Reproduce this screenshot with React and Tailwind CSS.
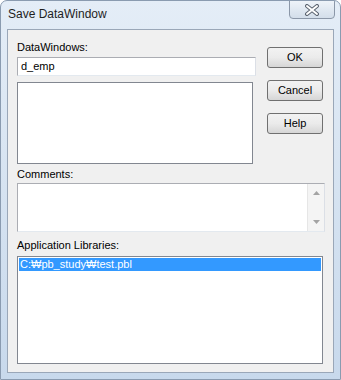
export default function App() {
  const font = { fontFamily: '"Liberation Sans", "Noto Sans CJK KR", sans-serif' };

  return (
    <div
      className="w-[341px] h-[380px] flex flex-col overflow-hidden rounded-t-[7px] border border-[#8a9bb0] bg-gradient-to-b from-[#e4edf7] via-[#d6e3f1] to-[#c8d9ec] text-[11px] text-black"
      style={font}
    >
      {/* title bar */}
      <div className="h-[28px] flex items-start shrink-0">
        <div className="pl-[7px] pt-[6px] text-[12px] leading-[15px] text-[#1e1e1e]">Save DataWindow</div>
        <div className="ml-auto mr-[5px] w-[46px] h-[19px] -mt-[1px] rounded-b-[4px] border border-[#8b97a8] bg-gradient-to-b from-[#eef3f9] to-[#d3deea] flex items-center justify-center">
          <svg width="16" height="12" viewBox="0 0 16 12">
            <path d="M3 2 L13 10 M13 2 L3 10" stroke="#5b6470" strokeWidth="4" strokeLinecap="round" />
            <path d="M3 2 L13 10 M13 2 L3 10" stroke="#ffffff" strokeWidth="2" strokeLinecap="round" />
          </svg>
        </div>
      </div>

      {/* client area */}
      <div className="flex-1 flex px-[6px] pb-[6px]">
        <div className="flex-1 border border-[#9aa7b8] bg-[#f0f0f0] pl-[9px] pt-[10px] flex flex-col">
          <div className="flex">
            <div className="w-[239px] flex flex-col">
              <div className="h-[14px] leading-[14px]">DataWindows:</div>
              <div className="mt-[3px] h-[19px] border border-[#abadb3] border-r-[#dbdfe6] border-b-[#e3e9ef] bg-white px-[3px] leading-[17px]">
                d_emp
              </div>
              <div className="mt-[6px] w-[236px] h-[82px] border border-[#828790] bg-white" />
            </div>
            <div className="ml-[11px] w-[56px] mt-[7px] flex flex-col gap-[12px]">
              {["OK", "Cancel", "Help"].map((b) => (
                <button
                  key={b}
                  className="h-[21px] w-[56px] rounded-[3px] border border-[#707070] bg-gradient-to-b from-[#f2f2f2] via-[#ebebeb] to-[#d6d6d6] text-[11px] leading-[19px] text-black"
                  style={font}
                >
                  {b}
                </button>
              ))}
            </div>
          </div>

          <div className="mt-[3px] h-[14px] leading-[14px]">Comments:</div>
          <div className="mt-[2px] w-[308px] h-[49px] border border-[#abadb3] border-b-[#e3e9ef] border-r-[#dbdfe6] bg-white flex justify-end">
            <div className="w-[17px] h-full bg-[#f4f4f4] border-l border-[#e6e6e6] flex flex-col items-center justify-between py-[7px]">
              <svg width="7" height="4" viewBox="0 0 7 4">
                <path d="M0 4 L3.5 0 L7 4 Z" fill="#a3a3a3" />
              </svg>
              <svg width="7" height="4" viewBox="0 0 7 4">
                <path d="M0 0 L3.5 4 L7 0 Z" fill="#a3a3a3" />
              </svg>
            </div>
          </div>

          <div className="mt-[6px] h-[14px] leading-[14px]">Application Libraries:</div>
          <div className="mt-[4px] w-[306px] h-[108px] border border-[#828790] bg-white p-[1px]">
            <div className="h-[13px] bg-[#3399ff] text-white leading-[13px] pl-[1px]">C:₩pb_study₩test.pbl</div>
          </div>
        </div>
      </div>
    </div>
  );
}
